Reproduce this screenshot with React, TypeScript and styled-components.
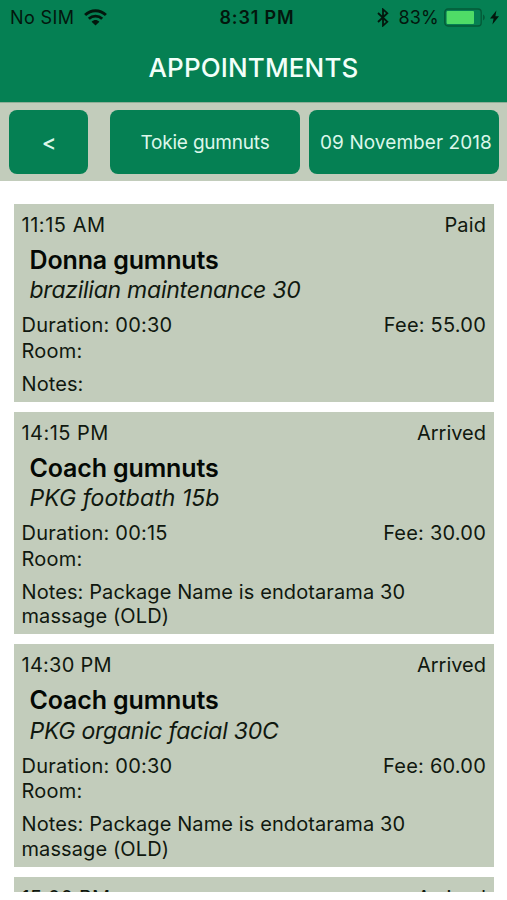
import React from 'react';
import styled, { createGlobalStyle } from 'styled-components';

const GREEN = '#058053';
const SAGE = '#c2ccbb';

const GlobalStyle = createGlobalStyle`
  * { box-sizing: border-box; }
  body {
    margin: 0;
    background: #fff;
    font-family: Inter, Roboto, sans-serif;
    color: #10180f;
  }
  h1, h2, p { margin: 0; }
`;

const Screen = styled.div`
  display: flex;
  flex-direction: column;
  height: 900px;
  overflow: hidden;
  background: #fff;
`;

const TopArea = styled.header`
  flex: none;
  height: 102px;
  background: ${GREEN};
`;

const StatusBar = styled.div`
  display: grid;
  grid-template-columns: 1fr auto 1fr;
  align-items: center;
  height: 34px;
  padding: 1px 8px 0 10px;
  font-size: 18px;
  line-height: 34px;
  color: #03170d;
`;

const StatusGroup = styled.div<{ $end?: boolean }>`
  display: flex;
  align-items: center;
  justify-content: ${(p) => (p.$end ? 'flex-end' : 'flex-start')};
`;

const Carrier = styled.span`
  margin-right: 10px;
  letter-spacing: 0.4px;
`;

const Clock = styled.span`
  padding-left: 5px;
  font-weight: 600;
  letter-spacing: 0.85px;
`;

const Percent = styled.span`
  margin: 0 5px 0 9px;
  letter-spacing: 0.2px;
`;

const Title = styled.h1`
  font-size: 26px;
  font-weight: 500;
  line-height: 68px;
  letter-spacing: 0.14px;
  text-align: center;
  color: #f2fff9;
`;

const Toolbar = styled.nav`
  flex: none;
  display: flex;
  justify-content: space-between;
  height: 79px;
  padding: 7px 8px 8px 9px;
  background: ${SAGE};
  border-top: 1px solid #8fae97;
`;

const ToolButton = styled.button<{ $width: number; $size?: number; $spacing?: number; $nudge?: number; $weight?: number }>`
  display: flex;
  align-items: center;
  justify-content: center;
  width: ${(p) => p.$width}px;
  height: 63.5px;
  padding: 1px 0 0 ${(p) => p.$nudge ?? 0}px;
  border: 0;
  border-radius: 8px;
  background: ${GREEN};
  color: #dcf7ea;
  font-family: inherit;
  font-size: ${(p) => p.$size ?? 19}px;
  font-weight: ${(p) => p.$weight ?? 400};
  letter-spacing: ${(p) => p.$spacing ?? 0}px;
  white-space: nowrap;
`;

const Selectors = styled.div`
  display: flex;
  gap: 9px;
`;

const List = styled.main`
  flex: none;
  display: flex;
  flex-direction: column;
  gap: 9.9px;
  height: 711px;
  padding: 22.7px 13px 0 13.5px;
  overflow: hidden;
`;

const Card = styled.article`
  flex: none;
  padding: 9px 8px 5.6px 8px;
  background: ${SAGE};
  font-size: 20px;
  line-height: 24.6px;
`;

const Row = styled.div<{ $tall?: boolean }>`
  display: flex;
  justify-content: space-between;
  line-height: ${(p) => (p.$tall ? 25.4 : 24.6)}px;
`;

const Text = styled.span<{ $spacing?: number }>`
  letter-spacing: ${(p) => p.$spacing ?? 0.22}px;
`;

const Client = styled.div`
  padding: 7.4px 8px 6px;
`;

const ClientName = styled.h2`
  font-size: 25px;
  font-weight: 600;
  line-height: 30.6px;
  letter-spacing: -0.14px;
  color: #040804;
`;

const Service = styled.p<{ $spacing: number }>`
  font-size: 23px;
  font-style: italic;
  line-height: 31.9px;
  letter-spacing: ${(p) => p.$spacing}px;
`;

const Notes = styled.p`
  width: 400px;
  padding-top: 7.6px;
  letter-spacing: 0.1px;
`;

const Icon = styled.svg`
  display: block;
  flex: none;
  margin-top: -2px;
`;

const WifiIcon = () => (
  <Icon width="23" height="17" viewBox="0 0 23 17">
    <g fill="none" stroke="#03170d" strokeWidth="2.9">
      <path d="M1.1 6C7 .3 16 .3 21.9 6" />
      <path d="M4.8 9.8c3.8-3.6 9.6-3.6 13.4 0" />
    </g>
    <path d="M7.6 12.7c2.4-2.2 5.4-2.2 7.8 0L11.5 16.6z" fill="#03170d" />
  </Icon>
);

const BluetoothIcon = () => (
  <Icon width="12" height="19" viewBox="0 0 12 19">
    <path d="M1 5l9.3 8.8L6 17.6V1.4l4.3 3.8L1 14" fill="none" stroke="#03170d" strokeWidth="1.8" />
  </Icon>
);

const BatteryIcon = () => (
  <Icon width="46" height="19" viewBox="0 0 46 19">
    <rect x="0.8" y="1" width="36.4" height="17" rx="3.2" fill="none" stroke="#045a38" strokeWidth="1.4" />
    <rect x="2.6" y="3" width="27.4" height="13" rx="1" fill="#4fdc67" />
    <path d="M39 6.6c2.4.8 2.4 5 0 5.8z" fill="#045a38" />
  </Icon>
);

const BoltIcon = () => (
  <Icon width="9" height="15" viewBox="0 0 9 15">
    <path d="M6.4.4L0 8.5h3.6L2.4 14.6 9 6.2H5.4z" fill="#03170d" />
  </Icon>
);

type Appointment = {
  time: string;
  timeSpacing: number;
  status: string;
  statusSpacing: number;
  details?: {
    client: string;
    service: string;
    serviceSpacing: number;
    duration: string;
    fee: string;
    notes: string;
  };
};

const appointments: Appointment[] = [
  {
    time: '11:15 AM', timeSpacing: 0.55, status: 'Paid', statusSpacing: 0.1,
    details: {
      client: 'Donna gumnuts', service: 'brazilian maintenance 30', serviceSpacing: -0.25,
      duration: '00:30', fee: '55.00', notes: '',
    },
  },
  {
    time: '14:15 PM', timeSpacing: 0.45, status: 'Arrived', statusSpacing: 0,
    details: {
      client: 'Coach gumnuts', service: 'PKG footbath 15b', serviceSpacing: 0.04,
      duration: '00:15', fee: '30.00', notes: 'Package Name is endotarama 30 massage (OLD)',
    },
  },
  {
    time: '14:30 PM', timeSpacing: 0.26, status: 'Arrived', statusSpacing: 0,
    details: {
      client: 'Coach gumnuts', service: 'PKG organic facial 30C', serviceSpacing: -0.25,
      duration: '00:30', fee: '60.00', notes: 'Package Name is endotarama 30 massage (OLD)',
    },
  },
  { time: '15:00 PM', timeSpacing: 0.1, status: 'Arrived', statusSpacing: 0 },
];

export default function App() {
  return (
    <>
      <GlobalStyle />
      <Screen>
        <TopArea>
          <StatusBar>
            <StatusGroup>
              <Carrier>No SIM</Carrier>
              <WifiIcon />
            </StatusGroup>
            <Clock>8:31 PM</Clock>
            <StatusGroup $end>
              <BluetoothIcon />
              <Percent>83%</Percent>
              <BatteryIcon />
              <BoltIcon />
            </StatusGroup>
          </StatusBar>
          <Title>APPOINTMENTS</Title>
        </TopArea>
        <Toolbar>
          <ToolButton $width={79} $size={22} $weight={500} $nudge={1}>&lt;</ToolButton>
          <Selectors>
            <ToolButton $width={190} $spacing={-0.2}>Tokie gumnuts</ToolButton>
            <ToolButton $width={190} $spacing={0.07} $nudge={4}>09 November 2018</ToolButton>
          </Selectors>
        </Toolbar>
        <List>
          {appointments.map(({ time, timeSpacing, status, statusSpacing, details }) => (
            <Card key={time}>
              <Row>
                <Text $spacing={timeSpacing}>{time}</Text>
                <Text $spacing={statusSpacing}>{status}</Text>
              </Row>
              {details && (
                <>
                  <Client>
                    <ClientName>{details.client}</ClientName>
                    <Service $spacing={details.serviceSpacing}>{details.service}</Service>
                  </Client>
                  <Row $tall>
                    <Text>{`Duration: ${details.duration}`}</Text>
                    <Text>{`Fee: ${details.fee}`}</Text>
                  </Row>
                  <Row $tall>
                    <Text>Room:</Text>
                  </Row>
                  <Notes>{`Notes: ${details.notes}`}</Notes>
                </>
              )}
            </Card>
          ))}
        </List>
      </Screen>
    </>
  );
}
